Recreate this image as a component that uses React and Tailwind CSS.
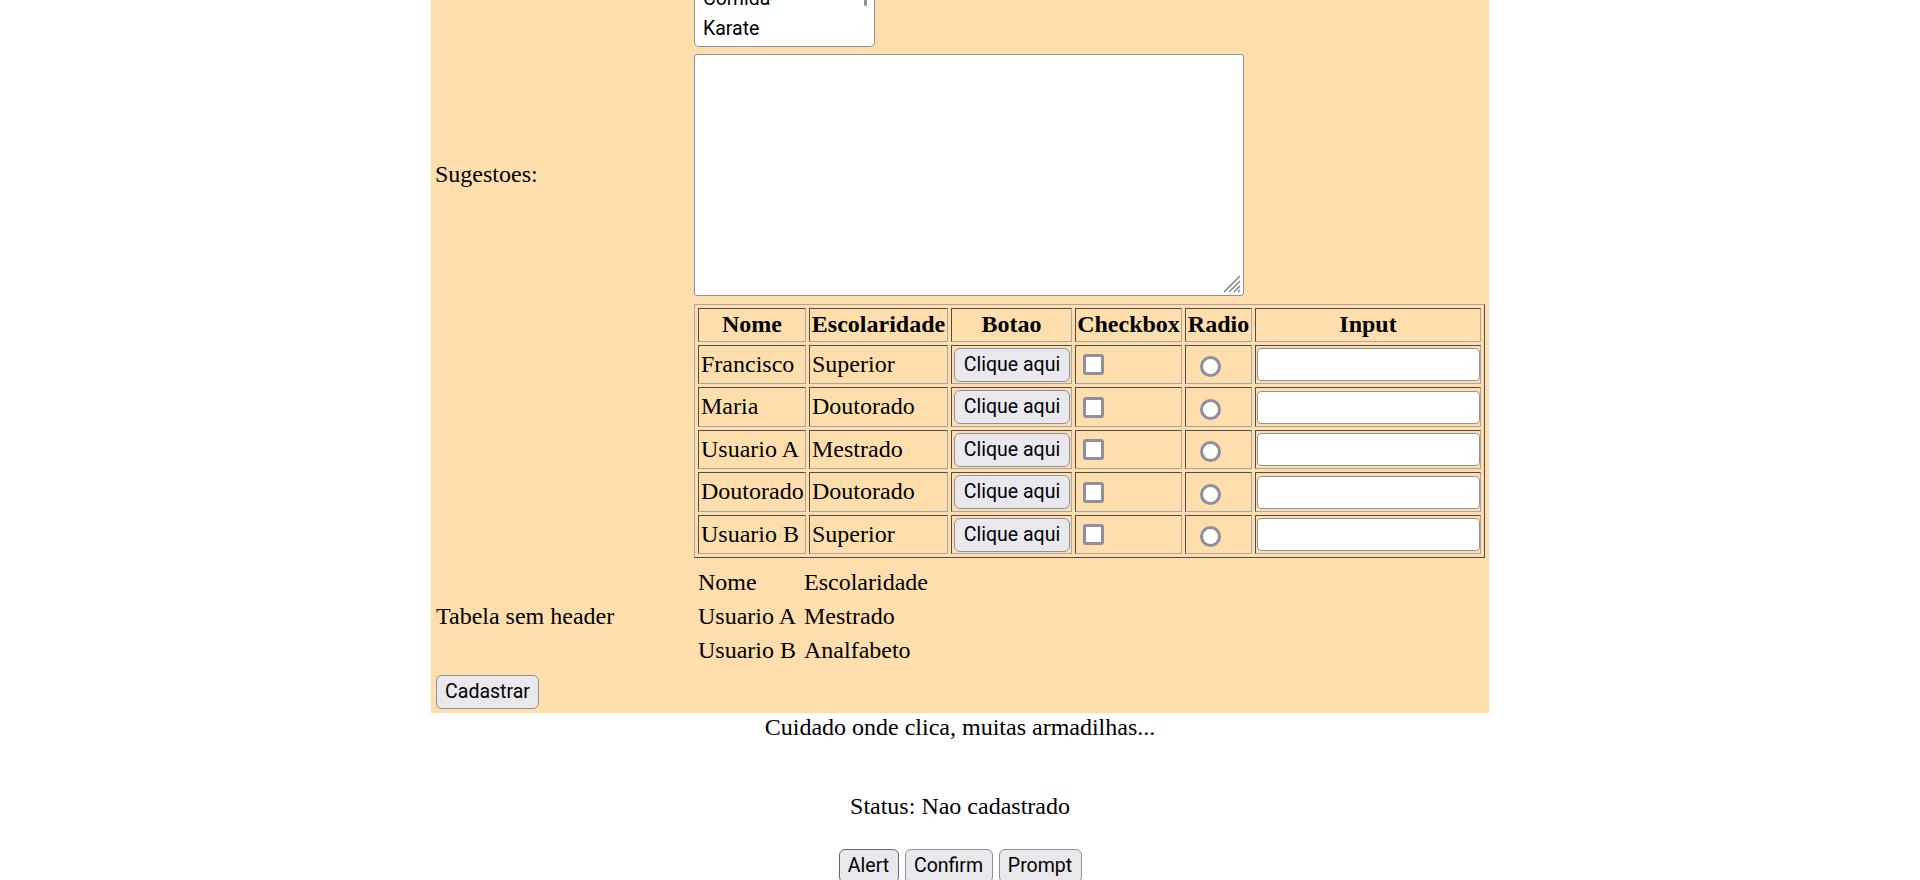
const serif = { fontFamily: '"Liberation Serif", "Times New Roman", serif' };

const rows = [
  { nome: "Francisco", esc: "Superior" },
  { nome: "Maria", esc: "Doutorado" },
  { nome: "Usuario A", esc: "Mestrado" },
  { nome: "Doutorado", esc: "Doutorado" },
  { nome: "Usuario B", esc: "Superior" },
];

const cell = "border border-t-[#4d4d4d] border-l-[#4d4d4d] border-b-[#a6a6a6] border-r-[#a6a6a6] flex items-center min-w-0";
const ctrl = "font-['Roboto',sans-serif] text-[19.5px] text-black";

function NativeButton({ children, className = "" }) {
  return (
    <button
      className={`${ctrl} h-[34px] flex items-center justify-center pt-[1px] border border-[#8f8f9d] rounded-[6px] bg-[#e9e9ed] ${className}`}
    >
      {children}
    </button>
  );
}

function Listbox() {
  return (
    <div className={`${ctrl} relative w-[181px] h-[47px] bg-white border-x border-b border-[#8f8f9d] rounded-b-[5px] overflow-hidden flex flex-col justify-end pl-[8px] pb-[2px]`}>
      <div className="h-[30px] leading-[30px] shrink-0">Comida</div>
      <div className="h-[30px] leading-[30px] shrink-0">Karate</div>
      <div className="absolute right-[7px] top-0 w-[3px] h-[6px] rounded-b bg-[#8f8f9d]" />
    </div>
  );
}

function Suggestions() {
  return (
    <div className="relative w-[550px] h-[242px]">
      <textarea className="block w-full h-full bg-white border border-[#8f8f9d] rounded-[3px] resize-none outline-none" />
      <svg className="absolute right-[3px] bottom-[3px]" width="20" height="20" viewBox="0 0 20 20">
        <g stroke="#7a7a7a" strokeWidth="1.3">
          <line x1="19" y1="3" x2="3" y2="19" />
          <line x1="19" y1="8" x2="8" y2="19" />
          <line x1="19" y1="13" x2="13" y2="19" />
          <line x1="19" y1="17" x2="17" y2="19" />
        </g>
      </svg>
    </div>
  );
}

function UserTable() {
  const heads = ["Nome", "Escolaridade", "Botao", "Checkbox", "Radio", "Input"];
  return (
    <div className="w-[791px] grid grid-cols-[108px_139px_121px_107px_67px_226px] grid-rows-[34px_39px_40px_39px_40px_39px] gap-[3px] p-[3px] border border-t-[#a6a6a6] border-l-[#a6a6a6] border-b-[#4d4d4d] border-r-[#4d4d4d]">
      {heads.map((t) => (
        <div key={t} className={`${cell} justify-center font-bold whitespace-nowrap`}>{t}</div>
      ))}
      {rows.map((r, i) => [
        <div key={`n${i}`} className={`${cell} pl-[2px] whitespace-nowrap`}>{r.nome}</div>,
        <div key={`e${i}`} className={`${cell} pl-[2px] whitespace-nowrap`}>{r.esc}</div>,
        <div key={`b${i}`} className={`${cell} pl-[2px]`}>
          <NativeButton className="w-[116px]">Clique aqui</NativeButton>
        </div>,
        <div key={`c${i}`} className={`${cell} pl-[7px]`}>
          <div className="w-[21px] h-[21px] bg-white border-[3px] border-[#8f8f9d] rounded-[3px]" />
        </div>,
        <div key={`r${i}`} className={`${cell} pl-[14px] pt-[4px]`}>
          <div className="w-[21px] h-[21px] bg-white border-[3px] border-[#8f8f9d] rounded-full" />
        </div>,
        <div key={`i${i}`} className={`${cell} pl-[1px]`}>
          <div className="w-[223px] h-[33px] bg-white border border-[#8f8f9d] rounded-[4px]" />
        </div>,
      ])}
    </div>
  );
}

export default function App() {
  return (
    <div className="min-h-[880px] bg-white text-black text-[24px] leading-[1.15] overflow-hidden" style={serif}>
      <div className="w-[1058px] mx-auto bg-[#ffdead] pb-[4px]">
        <div className="grid grid-cols-[263px_1fr]">
          <div />
          <Listbox />
        </div>

        <div className="grid grid-cols-[263px_1fr] items-center mt-[7px]">
          <div className="pl-[4px]">Sugestoes:</div>
          <Suggestions />
        </div>

        <div className="grid grid-cols-[263px_1fr] mt-[8px]">
          <div />
          <UserTable />
        </div>

        <div className="grid grid-cols-[263px_1fr] items-center mt-[8px]">
          <div className="pl-[5px]">Tabela sem header</div>
          <div className="grid grid-cols-[106px_auto] auto-rows-[34px] items-center pl-[4px]">
            <div>Nome</div>
            <div>Escolaridade</div>
            <div>Usuario A</div>
            <div>Mestrado</div>
            <div>Usuario B</div>
            <div>Analfabeto</div>
          </div>
        </div>

        <div className="mt-[7px] pl-[5px]">
          <NativeButton className="w-[103px] h-[33px]">Cadastrar</NativeButton>
        </div>
      </div>

      <div className="text-center mt-[1px]">Cuidado onde clica, muitas armadilhas...</div>
      <div className="text-center mt-[51px]">Status: Nao cadastrado</div>
      <div className="flex justify-center gap-[6px] mt-[29px]">
        <NativeButton className="w-[60px] bg-[#d0d0d7] border-[#676774]">Alert</NativeButton>
        <NativeButton className="w-[88px]">Confirm</NativeButton>
        <NativeButton className="w-[83px]">Prompt</NativeButton>
      </div>
    </div>
  );
}
